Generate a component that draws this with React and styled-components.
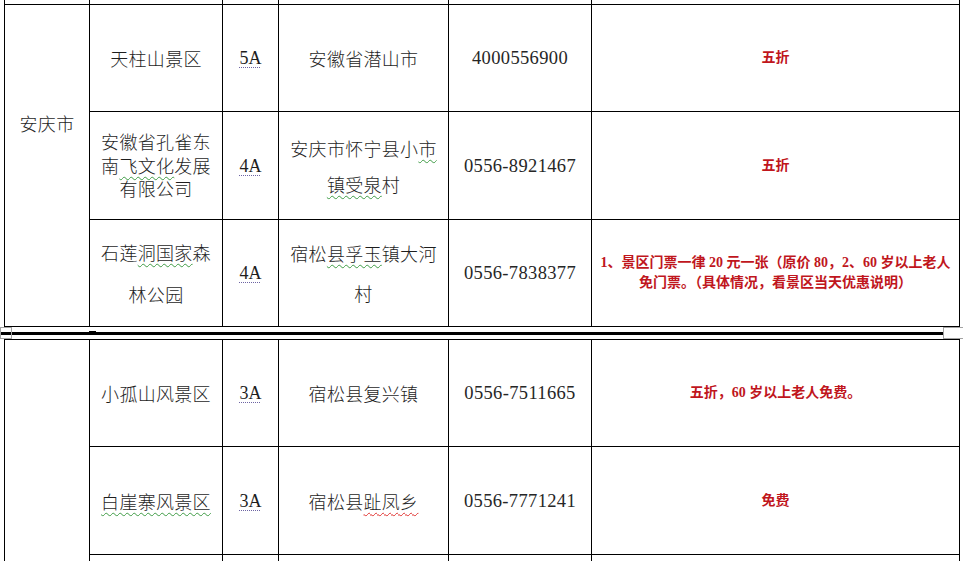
import React from 'react';
import styled, { createGlobalStyle } from 'styled-components';

const GlobalStyle = createGlobalStyle`
  html, body { margin: 0; padding: 0; background: #fff; }
  body { font-family: "Noto Sans CJK SC", sans-serif; color: #1e1e1e; }
`;

const COLUMNS = '85px 133px 56px 170px 143px 368px';

const Page = styled.div`
  position: relative;
  width: 963px;
  height: 561px;
  overflow: hidden;
  background: #fff;
`;

const Sheet = styled.div`
  display: grid;
  grid-template-columns: ${COLUMNS};
  grid-template-rows: ${(p) => p.$rows};
  width: max-content;
  margin-left: 4px;
  border-left: 1px solid #000;
  border-top: ${(p) => (p.$open ? 'none' : '1px solid #000')};
`;

const Cell = styled.div`
  box-sizing: border-box;
  grid-row: ${(p) => (p.$span ? `span ${p.$span}` : 'auto')};
  border-right: 1px solid #000;
  border-bottom: ${(p) => (p.$noBottom ? 'none' : '1px solid #000')};
  display: flex;
  align-items: ${(p) => (p.$top ? 'flex-start' : 'center')};
  justify-content: center;
  padding: ${(p) => (p.$top ? `${p.$top}px 4px 0` : '0 4px')};
  text-align: center;
  font-size: 18px;
  font-weight: 300;
  letter-spacing: 0.3px;
  line-height: ${(p) => p.$lh || 24}px;
`;

const Level = styled.span`
  font-family: "Liberation Serif", serif;
  font-size: 18px;
  font-weight: 400;
  letter-spacing: 0;
  text-decoration: underline dotted #6d64a3;
  text-decoration-thickness: 1px;
  text-underline-offset: 3px;
`;

const Phone = styled.span`
  font-family: "Liberation Serif", serif;
  font-size: 18.5px;
  font-weight: 400;
  letter-spacing: 0.35px;
  color: #262626;
`;

const Mark = styled.span`
  text-decoration: underline wavy ${(p) => (p.$tone === 'red' ? '#e0312f' : '#3f9b45')};
  text-decoration-thickness: 1px;
  text-underline-offset: 3px;
`;

const Offer = styled.div`
  flex: 1;
  font-family: "Liberation Serif", "Noto Sans CJK SC", serif;
  font-size: 14px;
  font-weight: 700;
  line-height: 20px;
  letter-spacing: 0;
  text-align: center;
  color: #c0161d;
  white-space: nowrap;
`;

const PageBreak = styled.div`
  box-sizing: border-box;
  height: 12px;
  padding-top: 5px;
`;

const BreakRule = styled.div`
  height: 3px;
  background: #000;
`;

const Handle = styled.div`
  position: absolute;
  box-sizing: border-box;
  top: ${(p) => p.$top}px;
  left: ${(p) => p.$left}px;
  width: ${(p) => p.$w}px;
  height: ${(p) => p.$h}px;
  border: 1px solid #a3a3a3;
  background: ${(p) => (p.$filled ? '#fff' : 'transparent')};
`;

const Anchor = styled.div`
  position: absolute;
  top: 331px;
  left: 89px;
  width: 7px;
  height: 4px;
  background: #000;
`;

const Row = ({ name, level, place, phone, offer, nameLh, placeLh }) => (
  <>
    <Cell $lh={nameLh}><span>{name}</span></Cell>
    <Cell><Level>{level}</Level></Cell>
    <Cell $lh={placeLh}><span>{place}</span></Cell>
    <Cell><Phone>{phone}</Phone></Cell>
    <Cell><Offer>{offer}</Offer></Cell>
  </>
);

const firstPage = [
  {
    name: '天柱山景区',
    level: '5A',
    place: '安徽省潜山市',
    phone: '4000556900',
    offer: '五折',
  },
  {
    name: <>安徽省孔雀东<br />南<Mark>飞文化</Mark>发展<br />有限公司</>,
    level: '4A',
    place: <>安庆市怀宁县小<Mark>市</Mark><br /><Mark>镇受泉</Mark>村</>,
    phone: '0556-8921467',
    offer: '五折',
    nameLh: 23.5,
    placeLh: 36,
  },
  {
    name: <>石莲<Mark>洞国家</Mark>森<br />林公园</>,
    level: '4A',
    place: <>宿松<Mark>县孚玉</Mark>镇大河<br />村</>,
    phone: '0556-7838377',
    offer: <>1、景区门票一律 20 元一张（原价 80，2、60 岁以上老人<br />免门票。（具体情况，看景区当天优惠说明）</>,
    nameLh: 42,
    placeLh: 40,
  },
];

const secondPage = [
  {
    name: '小孤山风景区',
    level: '3A',
    place: '宿松县复兴镇',
    phone: '0556-7511665',
    offer: '五折，60 岁以上老人免费。',
  },
  {
    name: <Mark>白崖寨风景区</Mark>,
    level: '3A',
    place: <>宿松县<Mark $tone="red">趾凤乡</Mark></>,
    phone: '0556-7771241',
    offer: '免费',
  },
];

export default function App() {
  return (
    <>
      <GlobalStyle />
      <Page>
        <Sheet $open $rows="5px 107px 108px 107px">
          {Array.from({ length: 6 }, (_, i) => <Cell key={`prev-${i}`} />)}
          <Cell $span={3} $top={106}><span>安庆市</span></Cell>
          {firstPage.map((row, i) => <Row key={`a-${i}`} {...row} />)}
        </Sheet>
        <PageBreak>
          <BreakRule />
        </PageBreak>
        <Sheet $rows="107px 108px 120px">
          <Cell $span={3} $noBottom />
          {secondPage.map((row, i) => <Row key={`b-${i}`} {...row} />)}
          {Array.from({ length: 5 }, (_, i) => <Cell key={`next-${i}`} />)}
        </Sheet>
        <Handle $top={327} $left={0} $w={12} $h={12} />
        <Handle $top={327} $left={943} $w={22} $h={12} $filled />
        <Anchor />
      </Page>
    </>
  );
}
